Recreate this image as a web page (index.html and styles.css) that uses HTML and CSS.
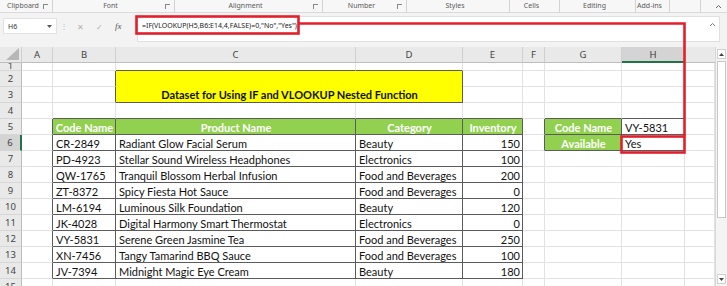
FILE: index.html
```html
<!DOCTYPE html>
<html lang="en">
<head>
  <meta charset="UTF-8">
  <title>IF and VLOOKUP</title>
  <link rel="stylesheet" href="styles.css">
</head>
<body class="xl-body">

<div class="xl-top">
  <div class="xl-ribbon">
    <div class="xl-grp">Clipboard <span class="xl-launch"></span></div>
    <div class="xl-grp">Font <span class="xl-launch"></span></div>
    <div class="xl-grp">Alignment <span class="xl-launch"></span></div>
    <div class="xl-grp">Number <span class="xl-launch"></span></div>
    <div class="xl-grp">Styles</div>
    <div class="xl-grp">Cells</div>
    <div class="xl-grp">Editing</div>
    <div class="xl-grp">Add-ins</div>
    <div class="xl-grp"></div>
    <div class="xl-grp xl-grp-last">
      <svg width="7" height="5" viewBox="0 0 7 5"><path d="M1 4 L3.5 1.5 L6 4" fill="none" stroke="#666" stroke-width="1"/></svg>
    </div>
  </div>

  <div class="xl-formula-row">
    <div class="xl-namebox">
      <span>H6</span>
      <svg width="5" height="3" viewBox="0 0 5 3"><path d="M0 0 H5 L2.5 3 Z" fill="#555"/></svg>
    </div>
    <div class="xl-dots">⋮</div>
    <div class="xl-fx-btns">
      <span class="xl-btn-gray">✕</span>
      <span class="xl-btn-gray">✓</span>
      <span class="xl-fx">fx</span>
    </div>
    <div class="xl-formula">
      <span>=IF(VLOOKUP(H5,B6:E14,4,FALSE)=0,"No","Yes")</span>
      <svg class="xl-formula-caret" width="7" height="5" viewBox="0 0 7 5"><path d="M1 4 L3.5 1.5 L6 4" fill="none" stroke="#777" stroke-width="1"/></svg>
    </div>
  </div>
</div>

<div class="xl-sheet-wrap">
  <div class="xl-sheet">
    <!-- column headers -->
    <div class="xl-ch xl-corner">
      <svg width="13" height="12" viewBox="0 0 13 12"><path d="M13 0 V12 H0 Z" fill="#b7b7b7"/></svg>
    </div>
    <div class="xl-ch">A</div>
    <div class="xl-ch">B</div>
    <div class="xl-ch">C</div>
    <div class="xl-ch">D</div>
    <div class="xl-ch">E</div>
    <div class="xl-ch">F</div>
    <div class="xl-ch">G</div>
    <div class="xl-ch xl-ch-sel">H</div>
    <div class="xl-ch xl-ch-last"></div>

    <!-- row 1 -->
    <div class="xl-rh xl-rh-cut">1</div>
    <div class="xl-c"></div>
    <div class="xl-c"></div>
    <div class="xl-c xl-db"></div>
    <div class="xl-c xl-db"></div>
    <div class="xl-c"></div>
    <div class="xl-c"></div>
    <div class="xl-c"></div>
    <div class="xl-c"></div>
    <div class="xl-c"></div>

    <!-- row 2 -->
    <div class="xl-rh">2</div>
    <div class="xl-c"></div>
    <div class="xl-c xl-dr"></div>
    <div class="xl-c xl-title">Dataset for Using IF and VLOOKUP Nested Function</div>
    <div class="xl-c"></div>
    <div class="xl-c"></div>
    <div class="xl-c"></div>
    <div class="xl-c"></div>
    <div class="xl-c"></div>

    <!-- row 3 -->
    <div class="xl-rh">3</div>
    <div class="xl-c"></div>
    <div class="xl-c xl-dr"></div>
    <div class="xl-c"></div>
    <div class="xl-c"></div>
    <div class="xl-c"></div>
    <div class="xl-c"></div>
    <div class="xl-c"></div>

    <!-- row 4 -->
    <div class="xl-rh">4</div>
    <div class="xl-c"></div>
    <div class="xl-c xl-db"></div>
    <div class="xl-c xl-db"></div>
    <div class="xl-c xl-db"></div>
    <div class="xl-c xl-db"></div>
    <div class="xl-c"></div>
    <div class="xl-c xl-db"></div>
    <div class="xl-c xl-db"></div>
    <div class="xl-c"></div>

    <!-- row 5 -->
    <div class="xl-rh">5</div>
    <div class="xl-c xl-dr"></div>
    <div class="xl-c xl-dk xl-hd">Code Name</div>
    <div class="xl-c xl-dk xl-hd">Product Name</div>
    <div class="xl-c xl-dk xl-hd">Category</div>
    <div class="xl-c xl-dk xl-hd">Inventory</div>
    <div class="xl-c xl-dr"></div>
    <div class="xl-c xl-dk xl-hd">Code Name</div>
    <div class="xl-c xl-dk">VY-5831</div>
    <div class="xl-c"></div>

    <!-- row 6 -->
    <div class="xl-rh xl-rh-sel">6</div>
    <div class="xl-c xl-dr"></div>
    <div class="xl-c xl-dk">CR-2849</div>
    <div class="xl-c xl-dk">Radiant Glow Facial Serum</div>
    <div class="xl-c xl-dk">Beauty</div>
    <div class="xl-c xl-dk xl-num">150</div>
    <div class="xl-c xl-dr"></div>
    <div class="xl-c xl-dk xl-hd">Available</div>
    <div class="xl-c xl-dk">Yes</div>
    <div class="xl-c"></div>

    <!-- row 7 -->
    <div class="xl-rh">7</div>
    <div class="xl-c xl-dr"></div>
    <div class="xl-c xl-dk">PD-4923</div>
    <div class="xl-c xl-dk">Stellar Sound Wireless Headphones</div>
    <div class="xl-c xl-dk">Electronics</div>
    <div class="xl-c xl-dk xl-num">100</div>
    <div class="xl-c"></div>
    <div class="xl-c"></div>
    <div class="xl-c"></div>
    <div class="xl-c"></div>

    <!-- row 8 -->
    <div class="xl-rh">8</div>
    <div class="xl-c xl-dr"></div>
    <div class="xl-c xl-dk">QW-1765</div>
    <div class="xl-c xl-dk">Tranquil Blossom Herbal Infusion</div>
    <div class="xl-c xl-dk">Food and Beverages</div>
    <div class="xl-c xl-dk xl-num">200</div>
    <div class="xl-c"></div>
    <div class="xl-c"></div>
    <div class="xl-c"></div>
    <div class="xl-c"></div>

    <!-- row 9 -->
    <div class="xl-rh">9</div>
    <div class="xl-c xl-dr"></div>
    <div class="xl-c xl-dk">ZT-8372</div>
    <div class="xl-c xl-dk">Spicy Fiesta Hot Sauce</div>
    <div class="xl-c xl-dk">Food and Beverages</div>
    <div class="xl-c xl-dk xl-num">0</div>
    <div class="xl-c"></div>
    <div class="xl-c"></div>
    <div class="xl-c"></div>
    <div class="xl-c"></div>

    <!-- row 10 -->
    <div class="xl-rh">10</div>
    <div class="xl-c xl-dr"></div>
    <div class="xl-c xl-dk">LM-6194</div>
    <div class="xl-c xl-dk">Luminous Silk Foundation</div>
    <div class="xl-c xl-dk">Beauty</div>
    <div class="xl-c xl-dk xl-num">120</div>
    <div class="xl-c"></div>
    <div class="xl-c"></div>
    <div class="xl-c"></div>
    <div class="xl-c"></div>

    <!-- row 11 -->
    <div class="xl-rh">11</div>
    <div class="xl-c xl-dr"></div>
    <div class="xl-c xl-dk">JK-4028</div>
    <div class="xl-c xl-dk">Digital Harmony Smart Thermostat</div>
    <div class="xl-c xl-dk">Electronics</div>
    <div class="xl-c xl-dk xl-num">0</div>
    <div class="xl-c"></div>
    <div class="xl-c"></div>
    <div class="xl-c"></div>
    <div class="xl-c"></div>

    <!-- row 12 -->
    <div class="xl-rh">12</div>
    <div class="xl-c xl-dr"></div>
    <div class="xl-c xl-dk">VY-5831</div>
    <div class="xl-c xl-dk">Serene Green Jasmine Tea</div>
    <div class="xl-c xl-dk">Food and Beverages</div>
    <div class="xl-c xl-dk xl-num">250</div>
    <div class="xl-c"></div>
    <div class="xl-c"></div>
    <div class="xl-c"></div>
    <div class="xl-c"></div>

    <!-- row 13 -->
    <div class="xl-rh">13</div>
    <div class="xl-c xl-dr"></div>
    <div class="xl-c xl-dk">XN-7456</div>
    <div class="xl-c xl-dk">Tangy Tamarind BBQ Sauce</div>
    <div class="xl-c xl-dk">Food and Beverages</div>
    <div class="xl-c xl-dk xl-num">100</div>
    <div class="xl-c"></div>
    <div class="xl-c"></div>
    <div class="xl-c"></div>
    <div class="xl-c"></div>

    <!-- row 14 -->
    <div class="xl-rh">14</div>
    <div class="xl-c xl-dr"></div>
    <div class="xl-c xl-dk">JV-7394</div>
    <div class="xl-c xl-dk">Midnight Magic Eye Cream</div>
    <div class="xl-c xl-dk">Beauty</div>
    <div class="xl-c xl-dk xl-num">180</div>
    <div class="xl-c"></div>
    <div class="xl-c"></div>
    <div class="xl-c"></div>
    <div class="xl-c"></div>

    <!-- row 15 -->
    <div class="xl-rh">15</div>
    <div class="xl-c"></div>
    <div class="xl-c"></div>
    <div class="xl-c"></div>
    <div class="xl-c"></div>
    <div class="xl-c"></div>
    <div class="xl-c"></div>
    <div class="xl-c"></div>
    <div class="xl-c"></div>
    <div class="xl-c"></div>
  </div>

  <div class="xl-scroll">
    <div class="xl-scroll-btn">
      <svg width="5" height="3" viewBox="0 0 5 3"><path d="M0 3 H5 L2.5 0 Z" fill="#444"/></svg>
    </div>
    <div class="xl-scroll-thumb"></div>
    <div class="xl-scroll-space"></div>
    <div class="xl-scroll-btn">
      <svg width="5" height="3" viewBox="0 0 5 3"><path d="M0 0 H5 L2.5 3 Z" fill="#444"/></svg>
    </div>
  </div>
</div>

<!-- red annotation drawn over the sheet -->
<svg class="xl-mark" width="727" height="286" viewBox="0 0 727 286">
  <rect x="136.5" y="16.5" width="162" height="17" fill="none" stroke="#e41e2b" stroke-width="2.6"/>
  <path d="M298 23.5 H684.5 V136" fill="none" stroke="#e41e2b" stroke-width="2.6"/>
  <rect x="621.5" y="136.5" width="63" height="16" fill="none" stroke="#e41e2b" stroke-width="2.6"/>
</svg>

</body>
</html>
```

FILE: styles.css
```css
/* base */
.xl-body {
  margin: 0;
  padding: 0;
  width: 727px;
  height: 286px;
  overflow: hidden;
  position: relative;
  background: #fff;
  font-family: "Noto Sans", sans-serif;
}

/* ribbon group labels */
.xl-top {
  height: 47px;
  background: #f3f3f3;
}

.xl-ribbon {
  display: grid;
  grid-template-columns: 53px 122px 148px 84px 103px 50px 76px 34px 31px 1fr;
  height: 12px;
  border-bottom: 1px solid #dadada;
  background: #f7f7f7;
}

.xl-grp {
  position: relative;
  border-right: 1px solid #d2d2d2;
  font-size: 7px;
  line-height: 12px;
  color: #5a5a5a;
  text-align: center;
  padding-right: 6px;
}

.xl-grp-last {
  border-right: 0;
  padding: 0;
  display: flex;
  align-items: center;
  justify-content: flex-end;
  padding-right: 5px;
}

.xl-launch {
  position: absolute;
  right: 4px;
  top: 4px;
  width: 4px;
  height: 4px;
  border-left: 1px solid #888;
  border-top: 1px solid #888;
}

/* formula row */
.xl-formula-row {
  display: flex;
  align-items: flex-start;
  padding-top: 3px;
}

.xl-namebox {
  width: 54px;
  height: 16px;
  margin: 2px 0 0 3px;
  box-sizing: border-box;
  background: #fff;
  border: 1px solid #e2e2e2;
  display: flex;
  align-items: center;
  justify-content: space-between;
  padding: 0 4px 0 4px;
  font-size: 7px;
  color: #333;
}

.xl-dots {
  width: 14px;
  padding-top: 4px;
  text-align: center;
  font-size: 8px;
  color: #b5b5b5;
}

.xl-fx-btns {
  display: flex;
  align-items: center;
  height: 20px;
  width: 60px;
  padding-left: 6px;
  gap: 12px;
}

.xl-btn-gray {
  font-size: 8px;
  color: #b0b0b0;
}

.xl-fx {
  font-family: "Liberation Serif", serif;
  font-style: italic;
  font-size: 9px;
  color: #555;
}

.xl-formula {
  flex: 1;
  height: 26px;
  margin-right: 7px;
  box-sizing: border-box;
  background: #fff;
  border: 1px solid #e0e0e0;
  position: relative;
  padding: 3px 0 0 4px;
  font-size: 7px;
  line-height: 12px;
  color: #222;
}

.xl-formula-caret {
  position: absolute;
  right: 3px;
  top: 5px;
}

/* sheet */
.xl-sheet-wrap {
  display: flex;
  height: 239px;
  overflow: hidden;
}

.xl-sheet {
  display: grid;
  grid-template-columns: 22px 31px 63px 240px 107px 60px 22px 77px 63px 30px;
  grid-template-rows: 16px 8px repeat(14, 16px);
  width: 715px;
  font-family: "Lato", sans-serif;
  font-size: 11px;
  color: #111;
}

.xl-ch {
  background: #e9e9e9;
  border-right: 1px solid #cfcfcf;
  border-bottom: 1px solid #bdbdbd;
  box-sizing: border-box;
  display: flex;
  align-items: center;
  justify-content: center;
  font-family: "Noto Sans", sans-serif;
  font-size: 9.5px;
  color: #444;
}

.xl-corner {
  justify-content: flex-end;
  align-items: flex-end;
  padding: 0 2px 2px 0;
}

.xl-ch-sel {
  background: #d4d4d4;
  border-bottom: 2px solid #217346;
  color: #3b3b3b;
}

.xl-ch-last {
  border-right: 0;
}

.xl-rh {
  background: #e9e9e9;
  border-right: 1px solid #bdbdbd;
  border-bottom: 1px solid #d6d6d6;
  box-sizing: border-box;
  display: flex;
  align-items: center;
  justify-content: center;
  font-family: "Noto Sans", sans-serif;
  font-size: 9.5px;
  color: #444;
  overflow: hidden;
}

.xl-rh-cut {
  align-items: flex-end;
  line-height: 8px;
}

.xl-rh-sel {
  background: #d4d4d4;
  border-right: 2px solid #217346;
}

.xl-c {
  border-right: 1px solid #e2e2e2;
  border-bottom: 1px solid #e2e2e2;
  box-sizing: border-box;
  display: flex;
  align-items: flex-end;
  padding: 0 2px 0 3px;
  line-height: 13px;
  white-space: nowrap;
  overflow: hidden;
}

.xl-dr {
  border-right-color: #5b5b5b;
}

.xl-db {
  border-bottom-color: #5b5b5b;
}

.xl-dk {
  border-right-color: #5b5b5b;
  border-bottom-color: #5b5b5b;
}

.xl-hd {
  background: #92d050;
  color: #fff;
  font-weight: bold;
  justify-content: center;
}

.xl-num {
  justify-content: flex-end;
}

.xl-title {
  grid-column: 4 / span 2;
  grid-row: 3 / span 2;
  background: #ffff00;
  border-right-color: #5b5b5b;
  border-bottom-color: #5b5b5b;
  justify-content: center;
  font-weight: bold;
  padding-bottom: 1px;
}

/* scrollbar */
.xl-scroll {
  width: 12px;
  background: #f4f4f4;
  border-left: 1px solid #d8d8d8;
  box-sizing: border-box;
  display: flex;
  flex-direction: column;
  padding: 2px 1px;
}

.xl-scroll-btn {
  height: 8px;
  display: flex;
  align-items: center;
  justify-content: center;
  background: #fff;
  border: 1px solid #d0d0d0;
}

.xl-scroll-thumb {
  height: 155px;
  margin-top: 2px;
  background: #fff;
  border: 1px solid #c8c8c8;
}

.xl-scroll-space {
  flex: 1;
}

/* annotation */
.xl-mark {
  position: absolute;
  left: 0;
  top: 0;
  pointer-events: none;
}
```
